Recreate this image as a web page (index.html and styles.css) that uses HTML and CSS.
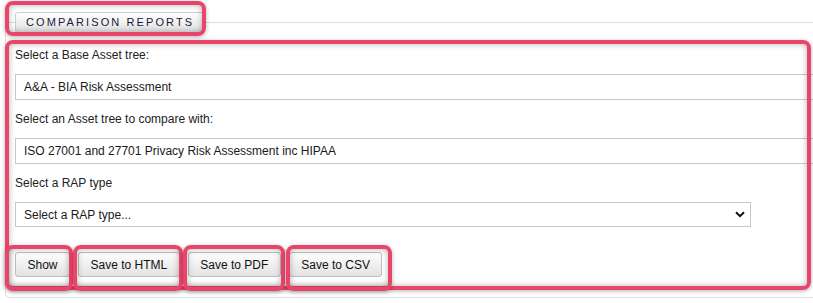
FILE: index.html
```html
<!DOCTYPE html>
<html lang="en">
<head>
    <meta charset="UTF-8">
    <meta name="viewport" content="width=device-width, initial-scale=1.0">
    <title>Comparison Reports</title>
<link rel="stylesheet" href="styles.css">
</head>
<body>
    <div class="page">
        <fieldset class="panel">
            <legend class="tab">COMPARISON REPORTS</legend>
            <div class="form">
                <label class="field_label">Select a Base Asset tree:</label>
                <div class="field_box">A&amp;A - BIA Risk Assessment</div>

                <label class="field_label">Select an Asset tree to compare with:</label>
                <div class="field_box">ISO 27001 and 27701 Privacy Risk Assessment inc HIPAA</div>

                <label class="field_label">Select a RAP type</label>
                <div class="field_box field_select">
                    <span>Select a RAP type...</span>
                    <svg width="10" height="7" viewBox="0 0 10 7"><path d="M1 1.2 L5 5.2 L9 1.2" fill="none" stroke="#111" stroke-width="2"/></svg>
                </div>

                <div class="btn_row">
                    <button class="btn">Show</button>
                    <button class="btn">Save to HTML</button>
                    <button class="btn">Save to PDF</button>
                    <button class="btn">Save to CSV</button>
                </div>
            </div>
        </fieldset>

        <!-- annotation marks -->
        <div class="mark mark_tab"></div>
        <div class="mark mark_form"></div>
        <div class="mark mark_show"></div>
        <div class="mark mark_html"></div>
        <div class="mark mark_pdf"></div>
        <div class="mark mark_csv"></div>
    </div>
</body>
</html>
```

FILE: styles.css
```css
*{
    margin:0;
    box-sizing: border-box;
}
body{
    overflow: hidden;
    font-family: "Liberation Sans", Arial, sans-serif;
    font-size: 12px;
    color: #222;
    background: #fff;
}
.page{
    position: relative;
    width: 840px;
    height: 303px;
    padding-top: 12px;
}
.panel{
    margin-left: 5px;
    border: 1px solid #ddd;
    border-radius: 5px;
    padding: 0 9px;
}
.tab{
    height: 21px;
    line-height: 19px;
    padding: 0 9px 0 10px;
    border: 1px solid #cdcdcd;
    border-radius: 3px;
    background: linear-gradient(#ffffff, #e1e1e1);
    font-size: 11px;
    letter-spacing: 2.1px;
    color: #1b1b38;
}
.form{
    padding: 15px 0 20px;
}
.field_label{
    display: block;
    line-height: 14px;
    margin-bottom: 12px;
}
.field_box{
    height: 26px;
    line-height: 24px;
    border: 1px solid #c8c8c8;
    padding: 0 8px;
    margin-bottom: 12px;
    color: #1a1a1a;
    white-space: nowrap;
}
.field_select{
    display: flex;
    justify-content: space-between;
    align-items: center;
    width: 736px;
    height: 25px;
    margin-top: 1px;
    margin-bottom: 0;
    padding-right: 5px;
}
.btn_row{
    display: flex;
    gap: 8px;
    margin-top: 25px;
}
.btn{
    height: 25px;
    padding: 0 11.5px;
    border: 1px solid #bebebe;
    border-radius: 3px;
    background: linear-gradient(#fdfdfd, #e3e3e3);
    font-family: "Liberation Sans", Arial, sans-serif;
    font-size: 12px;
    color: #111;
}
.mark{
    position: absolute;
    border: 4px solid #e9446a;
    border-radius: 8px;
    box-shadow: 0 1px 4px rgba(0,0,0,0.3), inset 0 0 6px rgba(0,0,0,0.3);
    pointer-events: none;
}
.mark_tab{ left: 5px; top: 1px; width: 201px; height: 35px; }
.mark_form{ left: 5px; top: 40px; width: 806px; height: 250px; }
.mark_show{ left: 5px; top: 245px; width: 68px; height: 46px; }
.mark_html{ left: 73px; top: 245px; width: 110px; height: 46px; }
.mark_pdf{ left: 183px; top: 245px; width: 102px; height: 46px; }
.mark_csv{ left: 286px; top: 245px; width: 106px; height: 46px; }
```
